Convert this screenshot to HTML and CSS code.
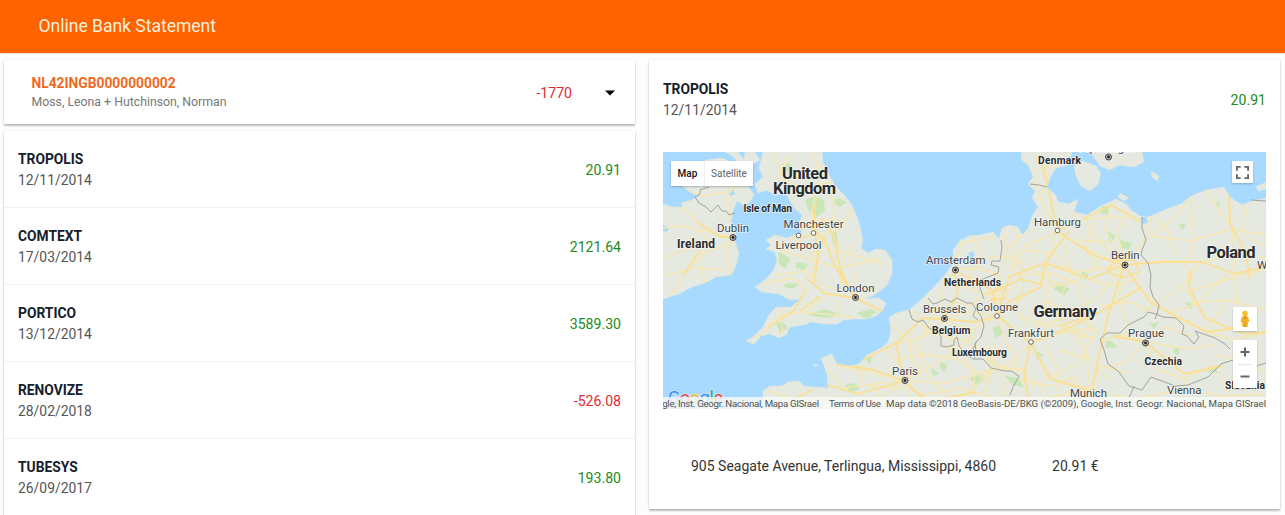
FILE: index.html
```html
<!DOCTYPE html>
<html lang="en">
<head>
<meta charset="utf-8">
<title>Online Bank Statement</title>
<link rel="stylesheet" href="styles.css">
</head>
<body>
<header class="toolbar"><h1 class="toolbar-title">Online Bank Statement</h1></header>
<main class="content">
  <section class="column">
    <div class="card account">
      <div>
        <div class="iban">NL42INGB0000000002</div>
        <div class="owners">Moss, Leona + Hutchinson, Norman</div>
      </div>
      <span class="balance negative">-1770</span>
      <svg class="caret" viewBox="0 0 10 6"><path d="M0 .5h10L5 5.5z"/></svg>
    </div>
    <div class="card list">
      <div class="row"><div><div class="name">TROPOLIS</div><div class="date">12/11/2014</div></div><span class="amount">20.91</span></div>
      <div class="row"><div><div class="name">COMTEXT</div><div class="date">17/03/2014</div></div><span class="amount">2121.64</span></div>
      <div class="row"><div><div class="name">PORTICO</div><div class="date">13/12/2014</div></div><span class="amount">3589.30</span></div>
      <div class="row"><div><div class="name">RENOVIZE</div><div class="date">28/02/2018</div></div><span class="amount negative">-526.08</span></div>
      <div class="row"><div><div class="name">TUBESYS</div><div class="date">26/09/2017</div></div><span class="amount">193.80</span></div>
    </div>
  </section>
  <section class="card detail">
    <div class="row detail-head"><div><div class="name">TROPOLIS</div><div class="date">12/11/2014</div></div><span class="amount">20.91</span></div>
    <div class="map">
      <svg class="map-canvas" viewBox="663 152 603 257">
        <defs>
          <path id="land" d="M663 204L672 207 683 207 681 203 692 200 699 196 690 192 683 187 690 183 685 177 700 168 706 160 722 158 733 163 742 174 748 186 754 195 749 203 743 205 737 201 733 211 731 222 736 233 735 242 739 253 736 266 731 275 716 277 705 283 692 287 679 294 663 299Z
          M726 152L738 152 744 160 741 168 735 158ZM745 152L755 152 760 160 753 164 748 174 743 164Z
          M763 152L822 152 823 162 829 174 834 184 843 194 851 203 857 217 860 226 863 241 861 248 868 253 876 249 885 250 892 260 892 273 887 285 880 291 874 295 866 299 879 298 886 303 883 310 876 316 866 319 854 319 844 320 837 324 824 324 812 322 803 325 790 327 786 335 779 338 770 334 761 336 754 344 746 341 754 336 763 327 769 315 776 307 791 307 801 299 790 300 779 294 762 292 755 287 765 280 773 271 777 260 775 252 766 249 771 245 766 240 775 235 787 238 802 232 798 225 802 215 794 208 789 199 785 193 775 195 767 190 758 193 755 184 763 177 759 168Z
          M763 409L763 391 770 386 782 386 788 382 799 381 804 386 815 387 828 388 827 374 821 358 832 354 837 364 850 366 859 364 867 355 881 348 888 342 891 331 889 318 896 313 909 310 922 299 934 287 945 275 954 262 953 250 960 242 968 236 980 235 993 232 999 239 1002 228 1010 225 1018 227 1022 235 1028 229 1032 216 1038 207 1032 198 1035 191 1028 184 1033 177 1029 166 1022 160 1021 152L1072 152 1068 165 1056 168 1050 178 1047 188 1055 194 1058 202 1069 204 1078 199 1074 212 1087 215 1101 206 1116 199 1126 204 1132 211 1140 216 1148 217 1158 213 1169 208 1181 204 1191 196 1206 190 1224 187 1231 198 1242 205 1252 201 1266 198L1266 409Z
          M1074 166L1083 161 1096 166 1101 174 1098 184 1090 191 1081 186 1076 176ZM1091 152L1142 152 1144 162 1134 167 1120 165 1110 170 1100 166 1096 160ZM1151 171L1159 176 1158 181 1152 177ZM1266 182L1256 187 1258 191 1266 189ZM1120 193l9 5-5 3-6-4zM813 365l5-1-2 3zM956 246l5-7 2 1-5 8z"/>
          <clipPath id="coast"><use href="#land"/></clipPath>
        </defs>
        <rect class="sea" x="663" y="152" width="603" height="257"/>
        <use href="#land" class="land"/>
        <g clip-path="url(#coast)">
          <g class="park">
            <path d="M805 200l10-4 9 4 1 11-6 4-10-3zM832 200l8-2 7 5-8 4zM778 252l6 2 6 5-5 10-6-5zM783 168l5-6 5 5-5 5zM776 323l7-1 5 6-8 5zM808 315l16-6 16 5-12 4zM856 313l15-4 5 3-9 7zM787 283l13 1-8 5-10-3zM970 378l10-4 6 5-9 7zM940 362l7 2-2 8-5-4zM1102 206l8 0-2 9-7-2zM1108 231l7 5-3 8-4-7zM1120 240l12 3-3 7-9-3zM1004 375l16 4 4 8-12-2zM1178 225l8-2-3 7zM1216 201l4 1-2 7zM831 230l6 3 1 14-5-3zM845 385l10-2 5 6-10 3zM863 357l9 0-2 7z"/>
            <path d="M1058 282l12 7-6 6-10-6zM1105 340l8 2 4 5-11 1zM1149 324l9-2-3 7zM992 328l8-3 4 8-8 5zM1172 350l8-3-2 9zM1185 302l10 2-5 5zM930 366l9 8-6 2zM1080 270l9 4-4 6zM818 204l5 8-7 5zM1035 350l8 5-6 5zM1206 372l10-5 4 6zM796 262l12 2-4 6-8-2z"/>
          </g>
          <path class="lake" d="M728 191l5-2 2 5-5 2zM968 254l4-3 3 4-4 5zM1141 218l5-2 2 7-6 1zM663 225l6 3-2 4-4-1z"/>
          <g class="roads minor">
            <path d="M663 228l20-2 20 5 30 6M663 258l30-11 20-7M670 296l19-28 16-15 29-12M682 207l15 15 8 16-4 23 4 25M690 192l12 4 30-5M738 183l-10 12 2 18 4 24-8 20 5 18M664 276l30-8 30 2"/>
            <path d="M772 152l10 23 15 16M788 155l-10 23M814 154l6 28 15 20M780 180l23 8 30-6M798 225l20-4 24 0M815 190l-3 23 4 20 20 22M795 240l20 15-3 20M780 250l34 10 25 8 40-9M835 200l-4 30 11 25-2 34M853 209l-13 20-19 7M775 275l31-4 18 15 30 6M762 284l30-6 15 12M840 252l22 5 24 8M850 245l4 30 3 22M756 338l24-22 24-4 50 5M840 299l-5 18M857 297l22 14M828 294l-22 18M780 310l3 24"/>
            <path d="M767 390l34 12 40-5 30 4M828 370l16 18 60-8M836 365l30 7 38 8M886 348l14 17 4 16 11 25M891 325l21 18 12 20-20 17M904 381l-35 25M904 381l30 24M904 381l40-22 31-23M904 381l42 2 44-13 37-2M913 311l15 22 37 8 33 24M926 299l10 20 40 12M945 318l-20 18-28 8M945 318l25-6 27 4M945 330l15 20 14 25 2 28M975 345l18 20 33 6M960 398l30-24 5-30M858 365l6 20 40 4"/>
            <path d="M955 270l-15 24 5 24M955 270l22-2 18 5M955 270l6-27 34-6M957 285l37 12 24-11M973 235l8 24-14 20M981 259l24-3 20 8M995 273l2 43 12 35M1003 228l5 28-12 20M1018 228l-4 30 13 17M1030 228l-24 21M997 316l-20 10-10 15M997 316l24-16 22-23M1008 300l-10-27"/>
            <path d="M1026 162l9 14 3 20 20 35M1040 154l7 25-7 20M1060 153l-5 15M1038 170l16-5M1050 195l7 35M1057 232l-32 14-16 27M1057 232l26-13 45-2M1057 232l-11 31 5 24M1057 232l32 18 34 14M1083 219l15 21 26 25M1078 200l-5 22-18 10M1110 204l-4 26 18 34M1130 211l-13 20 8 33M1045 263l35 9 44-7M1051 287l30-8 16-15M1042 300l35 17 21 16M1031 343l13-32 4-30M1031 343l-20 20-30 12M1031 343l29-10 34-5M1031 343l17 34 42 13M1072 329l14 22 4 38M1098 327l-20 36-46 24"/>
            <path d="M1072 312l27-16 25-31M1124 265l-5 32 8 28M1124 265l39-4 38 1 36-8 29 4M1124 265l17 25 27 24 38 18M1124 265l24-29 3-19M1151 236l24-19 15-19M1151 236l40 5 40-12 35 6M1191 200l3 40-7 27 5 36M1228 191l4 35 2 32 3 50M1205 190l25 35M1245 206l-3 28 24 13M1201 262l-20 26-40 24M1187 292l32-10 47-13M1192 303l36-3 38 10M1168 314l30-11 30-30M1206 332l20-31M1206 332l25 7 35-5M1215 355l27 5 24 13M1176 256l-8-24-13-15"/>
            <path d="M1145 342l-27-8-16 8M1145 342l-19 20-17 5M1145 342l20-15 27 9M1145 342l11 27 28 10 30-14M1145 342l44 7 27-5M1184 379l-1 28M1090 390l10-24 30 7M1090 390l43 9 49-9M1090 390l-49 9-41 2M1000 373l7 30M1027 370l1 36M1066 377l24 13M1215 366l18 31M1223 390l43-8M1184 390l40 6 42-2"/>
            <path d="M912 326l-2 30 12 22M930 320l-12 25 10 30 22 24M896 360l30-6 34 6 30 24M870 380l14 24M920 396l40-8 40 12M1010 262l14 22-10 24 16 20M1022 250l34 4 20 24M1036 240l-4 30 30 16M1066 245l4 30-8 20M1050 300l14 30 22 8M1020 316l24 8 28-8M1010 345l8 26 24 16 10 16M1044 345l14 24 0 32M1060 350l30 10 18 20M1078 290l14 24-6 24M1090 280l26 6 22-8M1100 306l30-4 24 10M1076 240l34 2M1094 222l-8 28 14 20M1020 275l30-2 34 14M985 340l6 32-8 30M1018 380l32 6 30-10M1036 326l30 0 30 14M943 345l22 12M950 300l20 6 20-16"/>
          </g>
          <g class="roads major">
            <path d="M697 222l24 15 14 0M700 250l-16 25M807 224l-15 15M807 224l17 15 10 25 20 34M854 298l-30-5-18-15M854 298l-14-30-6-32-12-18M854 298l28 13M800 311l20-15M824 237l-9 32M800 238l16-4M816 198l-2 26 4 34-4 24M806 290l-12 20-26 18"/>
            <path d="M943 319l15-25-4-24M904 381l-8-38 27-25 20 1 32 3 22-6M904 381l23 21 49-10M904 381l-30-11-37-6M998 316l-6-26-35-18M998 316l33 28 20 35 39 12M997 315l12-38 36-14 24-32M1057 231l38 25 29 9 38-3M1031 343l42-17 25-13M1124 265l-17 54-15 71M1124 265l26 37 57 30 30-4"/>
            <path d="M995 292l25-13 24 6M1010 300l-12 16M1083 219l28-14 30 17M1162 262l40 0 33 12 31-7M1229 190l1 33 15 29 5 27M1191 270l-2 18 16 30 40 16 21-2M1145 342l-32-6M1145 342l39 32 38-8M1042 162l7 30 8 38M828 385l30 9 46-13M988 294l14-8M990 300l16-2M1045 263l-4 24-30 14M1107 272l8-12 20 0 4 12-16 6zM1030 345l-6 30 6 30M1124 265l-34 14-45-16M1140 288l-40 24-40 14M896 343l-24 12-20 10M812 390l-20 10"/>
          </g>
        </g>
        <g class="borders">
          <path d="M709 187l-9 3 0 4-5 3 4 6 7 4 5 5 7-7 4 6 4 0 3 4 6-2M1030 184l9 1 8 2M1001 240l1 7-2 14-8 0-1 4 8 2-1 6-20 8 3 10 3 8"/>
          <path d="M909 310l3 9 6 3 5-2 6 8 10 5 2 4 0 9 6 1 7-2 0-5 3-3 2 9 6 7 8 6 10 0 8 9 14 3 6 0 8 5-6 11-3 8M937 303l8-4 6 3 6-4 10 5 5 0 4 6 5 7 3 10-3 11-6 6 1 10M976 308l-3 8 5 4M977 341l-4 8 2 9"/>
          <path d="M1142 217l0 11 4 12-4 10-1 5 7 8 3 12-1 12 3 10 6 8-2 9-2 5M1156 314l-8-2-4 5-16 8-8 8-13 0-7 6 4 11 4 14 11 8 10 14 13 4 9-13 24 9 13-1 20-8 13-13 12-4M1156 314l7 3 13 1 8 8-2 8 5 2 7 8 5-7-4-6 20 7 10 6 5 5M1134 386l-4 10-7 6-2 6M1251 370l8-5 7-2M1251 200l15 1M928 298l5 6 4-1"/>
        </g>
        <g class="pins">
          <g class="capital"><circle cx="733" cy="237.500" r="3"/><circle cx="855.500" cy="297.500" r="3"/><circle cx="955.500" cy="270" r="3"/><circle cx="944.500" cy="318.500" r="3"/><circle cx="905" cy="380.500" r="3"/><circle cx="1125" cy="265" r="3"/><circle cx="1108.500" cy="157" r="3"/><circle cx="1145.500" cy="343" r="3"/></g>
          <g class="capital-dot"><circle cx="733" cy="237.500" r="1.400"/><circle cx="855.500" cy="297.500" r="1.400"/><circle cx="955.500" cy="270" r="1.400"/><circle cx="944.500" cy="318.500" r="1.400"/><circle cx="905" cy="380.500" r="1.400"/><circle cx="1125" cy="265" r="1.400"/><circle cx="1108.500" cy="157" r="1.400"/><circle cx="1145.500" cy="343" r="1.400"/></g>
          <g class="city"><circle cx="798.500" cy="235.500" r="2.300"/><circle cx="813.500" cy="233" r="2.300"/><circle cx="1057.500" cy="230.500" r="2.300"/><circle cx="997" cy="316" r="2.300"/><circle cx="1031" cy="342" r="2.300"/></g>
        </g>
        <g class="labels">
          <text x="1077" y="151.500" textLength="58">Copenhagen</text>
          <text x="717" y="231.500" textLength="32">Dublin</text><text x="783.500" y="228" textLength="60">Manchester</text><text x="775.500" y="248.500" textLength="46">Liverpool</text><text x="836.500" y="292" textLength="38">London</text><text x="926" y="264" textLength="59.500">Amsterdam</text><text x="923" y="313" textLength="43.500">Brussels</text><text x="976" y="311" textLength="42">Cologne</text><text x="1008" y="336.500" textLength="46">Frankfurt</text><text x="892" y="374.500" textLength="26">Paris</text><text x="1034" y="225.500" textLength="47">Hamburg</text><text x="1111" y="259" textLength="28.500">Berlin</text><text x="1128" y="337" textLength="36">Prague</text><text x="1070" y="396.500" textLength="37">Munich</text><text x="1167" y="394" textLength="34.500">Vienna</text><text x="1257" y="268.500">Warsaw</text>
        </g>
        <g class="labels country">
          <text x="743.500" y="211.500" textLength="48.500">Isle of Man</text><text x="1038" y="164" textLength="43">Denmark</text><text x="944" y="285.500" textLength="57">Netherlands</text><text x="932" y="333.500" textLength="38.500">Belgium</text><text x="952" y="356" textLength="55">Luxembourg</text><text x="1144.500" y="364.500" textLength="37.500">Czechia</text><text x="1225" y="389" textLength="40">Slovakia</text>
          <text class="mid" x="677" y="247.500" textLength="38">Ireland</text>
          <text class="large" x="782" y="179" textLength="46">United</text><text class="large" x="773" y="194" textLength="63">Kingdom</text><text class="large" x="1033.500" y="316.500" textLength="63.500">Germany</text><text class="large" x="1206.500" y="258" textLength="49">Poland</text>
        </g>
        <g class="logo"><text x="668" y="403.500" textLength="55"><tspan fill="#4285f4">G</tspan><tspan fill="#ea4335">o</tspan><tspan fill="#fbbc05">o</tspan><tspan fill="#4285f4">g</tspan><tspan fill="#34a853">l</tspan><tspan fill="#ea4335">e</tspan></text></g>
        <rect class="legal-bar" x="663" y="397" width="603" height="12"/>
        <g class="legal"><text x="657" y="406.500" textLength="162">ogle, Inst. Geogr. Nacional, Mapa GISrael</text><text x="829" y="406.500" textLength="52">Terms of Use</text><text x="886" y="406.500" textLength="380">Map data ©2018 GeoBasis-DE/BKG (©2009), Google, Inst. Geogr. Nacional, Mapa GISrael</text></g>
      </svg>
      <div class="map-types"><span class="map-type selected">Map</span><span class="map-type">Satellite</span></div>
      <div class="control fullscreen"><svg viewBox="0 0 14 14"><path d="M1 5V1h4M9 1h4v4M13 9v4H9M5 13H1V9"/></svg></div>
      <div class="control pegman"><svg viewBox="0 0 12 18"><path fill="#f5b324" d="M3 6.500h6l1.500 5-1.500.500-.500 5h-5L3 12l-1.500-.500z"/><circle cx="6" cy="3.500" r="2.800" fill="#f9bd2e"/><path fill="#e57a35" d="M4 6.500h4l-2 3z"/><path fill="#d59024" d="M5.600 12h.8v5h-.8z"/></svg></div>
      <div class="control zoom"><svg viewBox="0 0 24 48"><path class="zoom-rule" d="M5 24.500h14"/><path d="M7.500 12h9M12 7.500v9M7.500 36.500h9"/></svg></div>
    </div>
    <div class="purchase"><span class="address">905 Seagate Avenue, Terlingua, Mississippi, 4860</span><span class="price">20.91 €</span></div>
  </section>
</main>
</body>
</html>
```
FILE: styles.css
```css
* { box-sizing: border-box; }
body { margin: 0; height: 515px; overflow: hidden; background: #fdfdfd; font-family: Roboto, "Liberation Sans", sans-serif; }
.toolbar { height: 53px; padding: 0 38.500px; display: flex; align-items: center; background: #ff6200; box-shadow: 0 1px 1px #eee5df; }
.toolbar-title { margin: 0 0 2px; font-size: 17.5px; font-weight: 400; color: #fff0dc; }
.content { display: grid; grid-template-columns: 631px 631px; gap: 14px; padding: 7px 4px; align-items: start; }
.column { display: flex; flex-direction: column; gap: 7px; }
.card { background: #fff; border-radius: 1px; box-shadow: 0 2px 2px rgba(0,0,0,.25), 0 0 2px rgba(0,0,0,.12); }
.account { height: 64px; display: flex; align-items: center; padding: 2px 20px 0 27.500px; }
.iban { font-size: 13.8px; line-height: 19px; font-weight: 700; color: #ee6a23; white-space: nowrap; }
.owners { font-size: 12.3px; line-height: 19px; color: #777; white-space: nowrap; }
.balance { margin-left: auto; font-size: 14.1px; }
.caret { width: 10px; height: 6px; margin-left: 33px; }
.list { height: 400px; }
.row { height: 77.200px; padding: 2px 14px 0; display: flex; align-items: center; justify-content: space-between; border-bottom: 1px solid #f2f2f2; }
.list .row:first-child { height: 76.500px; }
.name { font-size: 13.8px; line-height: 21px; font-weight: 700; color: #14202b; }
.date { font-size: 13.9px; line-height: 21px; color: #555; }
.amount { font-size: 14.1px; color: #1d8a22; }
.negative { color: #e02b35; }
.detail { height: 449px; }
.detail-head { height: 78px; border: 0; }
.map { position: relative; width: 603px; height: 257px; margin: 14px 14px 0; overflow: hidden; }
.map-canvas { display: block; width: 603px; height: 257px; }
.sea { fill: #a8d9fe; }
.lake { fill: #a8d9fe; }
.land { fill: #e5e9df; stroke: #dce8df; stroke-width: .6; }
.park { fill: #c8e6b8; }
.roads { fill: none; stroke-linejoin: round; }
.minor { stroke: #f6e7b4; stroke-width: 1.400; }
.major { stroke: #fbdf92; stroke-width: 1.800; }
.borders { fill: none; stroke: #a2a49f; stroke-width: 1; stroke-linejoin: round; }
.capital { fill: #bbb; stroke: #444; stroke-width: 1; }
.capital-dot { fill: #222; }
.city { fill: #fff; stroke: #666; stroke-width: 1; }
.labels { font-size: 11.4px; fill: #424446; stroke: rgba(255,255,255,.6); stroke-width: 1.500; paint-order: stroke; }
.country { font-size: 10.3px; font-weight: 700; fill: #292b2d; }
.country .mid { font-size: 12px; }
.country .large { font-size: 16.5px; }
.logo { font-size: 18px; stroke: rgba(255,255,255,.7); stroke-width: 1; paint-order: stroke; }
.legal-bar { fill: rgba(248,249,247,.84); }
.legal { font-size: 9.7px; fill: #505254; }
.map-types { position: absolute; left: 8px; top: 9px; width: 82px; height: 25px; display: flex; background: #fff; box-shadow: 0 1px 2px rgba(0,0,0,.25); font-size: 10px; color: #666; }
.map-type { flex: 1; display: flex; align-items: center; justify-content: center; }
.map-type.selected { flex: 0 0 34px; color: #111; font-weight: 500; border-right: 1px solid #eee; }
.control { position: absolute; display: flex; align-items: center; justify-content: center; background: #fff; box-shadow: 0 1px 2px rgba(0,0,0,.2); }
.control svg { fill: none; stroke: #666; stroke-width: 2; }
.fullscreen { left: 569px; top: 9px; width: 21px; height: 22px; }
.fullscreen svg { width: 13px; height: 13px; }
.pegman { left: 570px; top: 155px; width: 24px; height: 24px; }
.pegman svg { width: 12px; height: 18px; stroke: none; }
.zoom { left: 570px; top: 188px; width: 24px; height: 48px; }
.zoom svg { width: 24px; height: 48px; }
.zoom .zoom-rule { stroke: #e6e6e6; stroke-width: 1; }
.purchase { display: flex; gap: 56px; padding: 48px 28px 0; margin-left: 14px; font-size: 14px; line-height: 18px; color: #333; white-space: nowrap; }
```
